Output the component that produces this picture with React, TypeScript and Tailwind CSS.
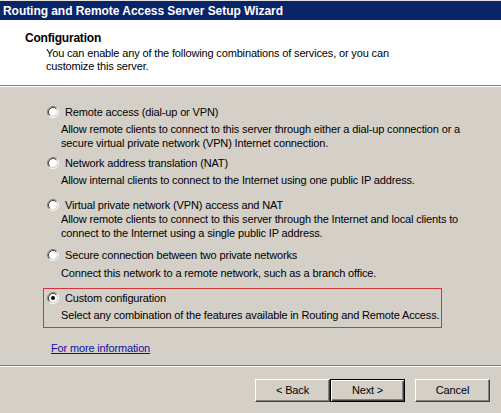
import type { ReactNode } from 'react';

type Option = {
  label: string;
  desc: string[];
  checked?: boolean;
  labelMt: string;
  descMt: string;
};

const options: Option[] = [
  {
    label: 'Remote access (dial-up or VPN)',
    desc: [
      'Allow remote clients to connect to this server through either a dial-up connection or a',
      'secure virtual private network (VPN) Internet connection.',
    ],
    labelMt: 'mt-[18px]',
    descMt: 'mt-[3px]',
  },
  {
    label: 'Network address translation (NAT)',
    desc: ['Allow internal clients to connect to the Internet using one public IP address.'],
    labelMt: 'mt-[6px]',
    descMt: 'mt-[3px]',
  },
  {
    label: 'Virtual private network (VPN) access and NAT',
    desc: [
      'Allow remote clients to connect to this server through the Internet and local clients to',
      'connect to the Internet using a single public IP address.',
    ],
    labelMt: 'mt-[11px]',
    descMt: 'mt-[0px]',
  },
  {
    label: 'Secure connection between two private networks',
    desc: ['Connect this network to a remote network, such as a branch office.'],
    labelMt: 'mt-[8px]',
    descMt: 'mt-[4px]',
  },
];

function Radio({ checked }: { checked?: boolean }) {
  return (
    <svg width="12" height="12" viewBox="0 0 12 12" className="shrink-0">
      <circle cx="6" cy="6" r="4.2" fill="#fff" />
      <path d="M2.11 9.89 A5.5 5.5 0 0 1 9.89 2.11" fill="none" stroke="#808080" strokeWidth="1" />
      <path d="M9.89 2.11 A5.5 5.5 0 0 1 2.11 9.89" fill="none" stroke="#fff" strokeWidth="1" />
      <path d="M2.82 9.18 A4.5 4.5 0 0 1 9.18 2.82" fill="none" stroke="#404040" strokeWidth="1" />
      <path d="M9.18 2.82 A4.5 4.5 0 0 1 2.82 9.18" fill="none" stroke="#d4d0c8" strokeWidth="1" />
      {checked && <circle cx="6" cy="6" r="2" fill="#000" />}
    </svg>
  );
}

function Choice({ label, desc, checked, labelMt, descMt }: Option) {
  return (
    <div>
      <div className={`${labelMt} flex h-[14px] items-center pl-[47px]`}>
        <Radio checked={checked} />
        <span className="ml-[6px] leading-[14px]">{label}</span>
      </div>
      <div className={`${descMt} pl-[61px] leading-[14px]`}>
        {desc.map((line) => (
          <div key={line} className="whitespace-nowrap">
            {line}
          </div>
        ))}
      </div>
    </div>
  );
}

function WinButton({ children, isDefault }: { children: ReactNode; isDefault?: boolean }) {
  return (
    <button
      type="button"
      className={`flex h-[23px] w-[75px] items-center justify-center bg-[#d4d0c8] text-[11px] text-black ${
        isDefault
          ? 'border border-black shadow-[inset_1px_1px_#fff,inset_-1px_-1px_#404040,inset_-2px_-2px_#808080]'
          : 'border border-t-white border-l-white border-r-[#404040] border-b-[#404040] shadow-[inset_-1px_-1px_#808080]'
      }`}
    >
      {children}
    </button>
  );
}

export default function App() {
  return (
    <div className="flex h-[413px] w-[501px] flex-col overflow-hidden bg-[#d4d0c8] font-['Liberation_Sans',Arial,sans-serif] text-[11px] tracking-[-0.15px] text-black">
      {/* title bar */}
      <div className="border-t border-[#e4e2dc]">
        <div className="flex h-[19px] items-center bg-[#0a246a] pl-[3px] text-[12px] font-bold tracking-[-0.05px] text-white">
          Routing and Remote Access Server Setup Wizard
        </div>
      </div>

      {/* header */}
      <div className="h-[65px] bg-white pl-[25px] pt-[11px]">
        <div className="text-[12px] font-bold leading-[14px] tracking-[-0.2px]">Configuration</div>
        <div className="mt-[2px] pl-[21px] leading-[13px]">
          <div>You can enable any of the following combinations of services, or you can</div>
          <div>customize this server.</div>
        </div>
      </div>
      <div className="border-t border-b border-t-[#808080] border-b-white" />

      {/* body */}
      <div className="flex-1">
        {options.map((opt) => (
          <Choice key={opt.label} {...opt} />
        ))}

        <div className="ml-[43px] mt-[8px] h-[40px] w-[399px] border border-[#d8353b] pt-[2px]">
          <div className="flex h-[14px] items-center pl-[3px]">
            <Radio checked />
            <span className="ml-[6px] leading-[14px]">Custom configuration</span>
          </div>
          <div className="mt-[3px] whitespace-nowrap pl-[17px] leading-[14px]">
            Select any combination of the features available in Routing and Remote Access.
          </div>
        </div>

        <div className="mt-[13px] pl-[51px] leading-[14px]">
          <span className="cursor-pointer text-[#1010a0] underline">For more information</span>
        </div>
      </div>

      {/* footer */}
      <div className="border-t border-b border-t-[#808080] border-b-white" />
      <div className="flex h-[46px] items-start justify-end pr-[11px] pt-[12px]">
        <WinButton>{'< Back'}</WinButton>
        <WinButton isDefault>{'Next >'}</WinButton>
        <div className="w-[10px]" />
        <WinButton>Cancel</WinButton>
      </div>
    </div>
  );
}
